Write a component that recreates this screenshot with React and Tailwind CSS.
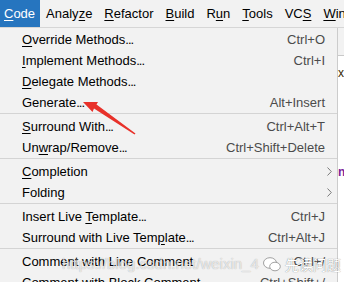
import React from "react";

const bar = [
  { pre: "", u: "C", post: "ode", active: true },
  { pre: "Analy", u: "z", post: "e" },
  { pre: "", u: "R", post: "efactor" },
  { pre: "", u: "B", post: "uild" },
  { pre: "R", u: "u", post: "n" },
  { pre: "", u: "T", post: "ools" },
  { pre: "VC", u: "S", post: "" },
  { pre: "", u: "W", post: "indow" },
];

// type: item | sep
const rows = [
  { pre: "", u: "O", post: "verride Methods", dots: true, key: "Ctrl+O" },
  { pre: "", u: "I", post: "mplement Methods", dots: true, key: "Ctrl+I" },
  { pre: "", u: "D", post: "elegate Methods", dots: true },
  { pre: "Generate", u: "", post: "", dots: true, key: "Alt+Insert" },
  { sep: true },
  { pre: "", u: "S", post: "urround With", dots: true, key: "Ctrl+Alt+T" },
  { pre: "Un", u: "w", post: "rap/Remove", dots: true, key: "Ctrl+Shift+Delete" },
  { sep: true },
  { pre: "", u: "C", post: "ompletion", sub: true },
  { pre: "Folding", u: "", post: "", sub: true },
  { sep: true },
  { pre: "Insert Live ", u: "T", post: "emplate", dots: true, key: "Ctrl+J" },
  { pre: "Surround with Live Tem", u: "p", post: "late", dots: true, key: "Ctrl+Alt+J" },
  { sep: true },
  { pre: "Comment with Line Comment", u: "", post: "", key: "Ctrl+/" },
  { pre: "Comment with Block Comment", u: "", post: "", key: "Ctrl+Shift+/" },
];

function Label({ pre, u, post }) {
  return (
    <span>
      {pre}
      {u && <span className="underline underline-offset-[2px] decoration-1">{u}</span>}
      {post}
    </span>
  );
}

function Chevron() {
  return (
    <svg width="5" height="9" viewBox="0 0 5 9" className="shrink-0">
      <path d="M0.5 0.5 L4.3 4.5 L0.5 8.5" fill="none" stroke="#7a7a7a" strokeWidth="1" />
    </svg>
  );
}

export default function App() {
  return (
    <div className="relative w-[344px] h-[282px] overflow-hidden bg-white font-['Liberation_Sans',Arial,sans-serif] text-[13px] text-black">
      {/* menu bar */}
      <div className="flex h-[28px] bg-[#f2f2f2] border-b border-[#d6d6d6]">
        {bar.map((b, i) => (
          <div
            key={i}
            className={
              b.active
                ? "flex items-center pl-[4px] pr-[5px] bg-[#2675bf] text-white"
                : "flex items-center px-[6px] whitespace-nowrap"
            }
          >
            <Label {...b} />
          </div>
        ))}
      </div>

      <div className="flex">
        {/* dropdown */}
        <div className="w-[338px] shrink-0 bg-[#f2f2f2] border-r border-[#cccccc]">
          {rows.map((r, i) =>
            r.sep ? (
              <div key={i} className="h-[3px] flex items-center">
                <div className="h-px w-full bg-[#d4d4d4]" />
              </div>
            ) : (
              <div key={i} className="h-[21px] flex items-center pl-[22px] pr-[12px] pt-[2px] whitespace-nowrap">
                <Label {...r} />
                {r.dots && <span className="tracking-[-1px]">...</span>}
                <div className="flex-1" />
                {r.key && <span className="text-[#4b4b4b]">{r.key}</span>}
                {r.sub && (
                  <span className="-mr-[7px]">
                    <Chevron />
                  </span>
                )}
              </div>
            )
          )}
        </div>

        {/* editor behind */}
        <div className="flex-1 flex flex-col">
          <div className="h-[28px] bg-[#f2f2f2] border-b border-[#c9c9c9]" />
          <div className="pt-[10px] text-[12px] leading-[14px] text-[#3a2a00]">x</div>
          <div className="pt-[85px] text-[12px] leading-[14px] font-bold text-[#7a1f9a]">ne</div>
        </div>
      </div>

      {/* red arrow annotation */}
      <svg className="absolute left-0 top-0 pointer-events-none" width="344" height="282" viewBox="0 0 344 282">
        <polygon
          points="83,102 98,102 96.5,104.5 135.5,133.5 134.5,134.5 94,108.5 92.5,112"
          fill="#e8312a"
        />
      </svg>

      {/* watermark */}
      <div className="absolute left-[62px] top-[253px] flex items-center gap-[4px] text-[15px] text-white/70 [text-shadow:0_0_1px_rgba(0,0,0,0.35)] pointer-events-none whitespace-nowrap">
        <span>https://blog.csdn.net/weixin_4</span>
        <svg width="18" height="15" viewBox="0 0 18 15">
          <ellipse cx="7" cy="6" rx="6.5" ry="5.3" fill="white" stroke="#8a8a8a" strokeWidth="0.8" />
          <ellipse cx="12" cy="9.5" rx="5.3" ry="4.3" fill="white" stroke="#8a8a8a" strokeWidth="0.8" />
        </svg>
        <span className="font-['Noto_Sans_CJK_SC',sans-serif] text-[14px] text-white [text-shadow:0_0_1px_rgba(0,0,0,0.6)]">先读问题</span>
      </div>
    </div>
  );
}
